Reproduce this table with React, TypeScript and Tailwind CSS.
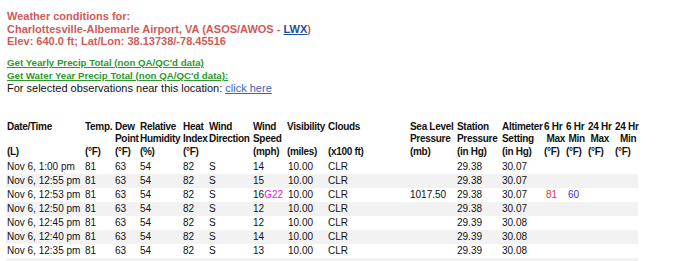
const COLS = [78, 30, 25, 43, 26, 44, 34, 41, 82, 47, 45, 42, 22, 22, 27, 24]

const HEADERS: [string, string, string][] = [
  ['Date/Time', '', '(L)'],
  ['Temp.', '', '(°F)'],
  ['Dew', 'Point', '(°F)'],
  ['Relative', 'Humidity', '(%)'],
  ['Heat', 'Index', '(°F)'],
  ['Wind', 'Direction', ''],
  ['Wind', 'Speed', '(mph)'],
  ['Visibility', '', '(miles)'],
  ['Clouds', '', '(x100 ft)'],
  ['Sea Level', 'Pressure', '(mb)'],
  ['Station', 'Pressure', '(in Hg)'],
  ['Altimeter', 'Setting', '(in Hg)'],
  ['6 Hr', '\u00a0Max', '(°F)'],
  ['6 Hr', '\u00a0Min', '(°F)'],
  ['24 Hr', '\u00a0Max', '(°F)'],
  ['24 Hr', '\u00a0\u00a0Min', '(°F)'],
]

type Row = {
  time: string
  speed: string
  gust?: string
  slp?: string
  station: string
  alt: string
  max6?: string
  min6?: string
}

const ROWS: Row[] = [
  { time: 'Nov 6, 1:00 pm', speed: '14', station: '29.38', alt: '30.07' },
  { time: 'Nov 6, 12:55 pm', speed: '15', station: '29.38', alt: '30.07' },
  { time: 'Nov 6, 12:53 pm', speed: '16', gust: 'G22', slp: '1017.50', station: '29.38', alt: '30.07', max6: '81', min6: '60' },
  { time: 'Nov 6, 12:50 pm', speed: '12', station: '29.38', alt: '30.07' },
  { time: 'Nov 6, 12:45 pm', speed: '12', station: '29.39', alt: '30.08' },
  { time: 'Nov 6, 12:40 pm', speed: '14', station: '29.39', alt: '30.08' },
  { time: 'Nov 6, 12:35 pm', speed: '13', station: '29.39', alt: '30.08' },
]

export default function App() {
  return (
    <div className="w-[680px] h-[261px] overflow-hidden bg-white font-['Liberation_Sans',Arial,sans-serif] text-[#111]">
      {/* Station heading */}
      <div className="pl-[7px] pt-[10px] text-[11px] font-bold leading-[12.7px] text-[#d05a5a]">
        <div>Weather conditions for:</div>
        <div>
          Charlottesville-Albemarle Airport, VA (ASOS/AWOS -{' '}
          <a href="#" className="text-[#1f4f9f] underline">LWX</a>)
        </div>
        <div>Elev: 640.0 ft; Lat/Lon: 38.13738/-78.45516</div>
      </div>

      {/* Links */}
      <div className="pl-[7px] mt-[8px] text-[11px] leading-[13px]">
        <div>
          <a href="#" className="text-[9.7px] font-bold text-[#2b9a2b] underline">Get Yearly Precip Total (non QA/QC'd data)</a>
        </div>
        <div>
          <a href="#" className="text-[9.7px] font-bold text-[#2b9a2b] underline">Get Water Year Precip Total (non QA/QC'd data):</a>
        </div>
        <div>
          For selected observations near this location:{' '}
          <a href="#" className="text-[#3366bb] underline">click here</a>
        </div>
      </div>

      {/* Observations table */}
      <table className="ml-[6px] mt-[26px] table-fixed border-collapse text-[10px] leading-[14px]" style={{ width: 632 }}>
        <colgroup>
          {COLS.map((w, i) => (
            <col key={i} style={{ width: w }} />
          ))}
        </colgroup>
        <thead>
          <tr>
            {HEADERS.map((h, i) => (
              <th key={i} className="p-0 pl-[1px] pb-[2px] text-left align-top font-bold leading-[12.3px] tracking-[-0.3px] whitespace-nowrap">
                <div>{h[0] || '\u00a0'}</div>
                <div>{h[1] || '\u00a0'}</div>
                <div>{h[2] || '\u00a0'}</div>
              </th>
            ))}
          </tr>
        </thead>
        <tbody>
          {ROWS.map((r, i) => (
            <tr key={r.time} className={i % 2 === 1 ? 'bg-[#f2f2f2]' : 'bg-white'}>
              <td className="p-0 pl-[1px] h-[14px] whitespace-nowrap">{r.time}</td>
              <td className="p-0 pl-[1px]">81</td>
              <td className="p-0 pl-[1px]">63</td>
              <td className="p-0 pl-[1px]">54</td>
              <td className="p-0 pl-[1px]">82</td>
              <td className="p-0 pl-[1px]">S</td>
              <td className="p-0 pl-[1px] whitespace-nowrap">
                {r.speed}
                {r.gust && <span className="text-[#e020e0]">{r.gust}</span>}
              </td>
              <td className="p-0 pl-[2px]">10.00</td>
              <td className="p-0 pl-[1px]">CLR</td>
              <td className="p-0 pl-[1px]">{r.slp}</td>
              <td className="p-0 pl-[1px]">{r.station}</td>
              <td className="p-0 pl-[1px]">{r.alt}</td>
              <td className="p-0 pl-[3px] text-[#e03535]">{r.max6}</td>
              <td className="p-0 pl-[3px] text-[#3535d0]">{r.min6}</td>
              <td className="p-0"></td>
              <td className="p-0"></td>
            </tr>
          ))}
          <tr className="bg-[#f2f2f2]">
            <td className="p-0 h-[14px]" colSpan={16}></td>
          </tr>
        </tbody>
      </table>
    </div>
  )
}
